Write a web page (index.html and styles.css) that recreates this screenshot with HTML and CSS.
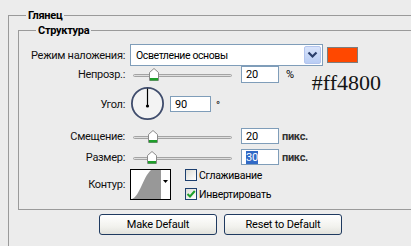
FILE: index.html
```html
<!DOCTYPE html>
<html lang="ru">
<head>
    <meta charset="UTF-8">
    <title>Глянец</title>
    <link rel="stylesheet" href="styles.css">
</head>
<body>

    <fieldset class="group">
        <legend>Глянец</legend>

        <fieldset class="group inner">
            <legend>Структура</legend>

            <div class="row row-mode">
                <span class="caption">Режим наложения:</span>
                <div class="select">
                    <span class="select-text">Осветление основы</span>
                    <span class="select-arrow">
                        <svg width="11" height="8" viewBox="0 0 11 8"><path d="M1.5 1.5 L5.5 5.5 L9.5 1.5" fill="none" stroke="#2b3f6b" stroke-width="2.2"/></svg>
                    </span>
                </div>
                <span class="swatch"></span>
            </div>

            <div class="row row-opacity">
                <span class="caption">Непрозр.:</span>
                <div class="slider">
                    <div class="track"></div>
                    <svg class="thumb" style="left: 19px" width="10" height="13" viewBox="0 0 10 13"><path d="M0.5 12.5 V4.5 L5 0.5 L9.5 4.5 V12.5 Z" fill="#fff" stroke="#8a8a8a"/><rect x="1" y="10" width="8" height="2.5" fill="#1f9e2a"/></svg>
                </div>
                <span class="field">20</span>
                <span class="unit">%</span>
                <span class="hex">#ff4800</span>
            </div>

            <div class="row row-angle">
                <span class="caption">Угол:</span>
                <svg class="dial" width="35" height="34" viewBox="0 0 35 34">
                    <circle cx="17.5" cy="16.5" r="15.6" fill="#f3f3f3" stroke="#3f4c6c" stroke-width="1.8"/>
                    <line x1="17.5" y1="1.5" x2="17.5" y2="19" stroke="#000" stroke-width="1.2"/>
                    <circle cx="17.5" cy="19" r="1.6" fill="#000"/>
                </svg>
                <span class="field field-angle">90</span>
                <span class="degree">°</span>
            </div>

            <div class="row row-offset">
                <span class="caption">Смещение:</span>
                <div class="slider">
                    <div class="track"></div>
                    <svg class="thumb" style="left: 18px" width="10" height="13" viewBox="0 0 10 13"><path d="M0.5 12.5 V4.5 L5 0.5 L9.5 4.5 V12.5 Z" fill="#fff" stroke="#8a8a8a"/><rect x="1" y="10" width="8" height="2.5" fill="#1f9e2a"/></svg>
                </div>
                <span class="field">20</span>
                <span class="unit unit-px">пикс.</span>
            </div>

            <div class="row row-size">
                <span class="caption">Размер:</span>
                <div class="slider">
                    <div class="track"></div>
                    <svg class="thumb" style="left: 17px" width="10" height="13" viewBox="0 0 10 13"><path d="M0.5 12.5 V4.5 L5 0.5 L9.5 4.5 V12.5 Z" fill="#fff" stroke="#8a8a8a"/><rect x="1" y="10" width="8" height="2.5" fill="#1f9e2a"/></svg>
                </div>
                <span class="field"><span class="selected">30</span></span>
                <span class="unit unit-px">пикс.</span>
            </div>

            <div class="row row-contour">
                <span class="caption">Контур:</span>
                <svg class="contour" width="41" height="31" viewBox="0 0 41 31">
                    <rect x="0.5" y="0.5" width="40" height="30" fill="#fff" stroke="#000"/>
                    <path d="M2 30 C10 27 13 8 21 1 L31 1 L31 30 Z" fill="#989898"/>
                    <path d="M33 11 H38 L35.5 14 Z" fill="#000"/>
                </svg>
                <div class="checks">
                    <label class="check"><span class="box"></span>Сглаживание</label>
                    <label class="check"><span class="box">
                        <svg width="10" height="10" viewBox="0 0 10 10"><path d="M1.5 5 L4 7.5 L8.8 2" fill="none" stroke="#1fa02a" stroke-width="2"/></svg>
                    </span>Инвертировать</label>
                </div>
            </div>
        </fieldset>

        <div class="actions">
            <button>Make Default</button>
            <button>Reset to Default</button>
        </div>
    </fieldset>

</body>
</html>
```

FILE: styles.css
```css
* {
    box-sizing: border-box;
}

body {
    margin: 0;
    background: #ececec;
    color: #000;
    font-family: Roboto, 'Liberation Sans', Arial, sans-serif;
    font-size: 11px;
    letter-spacing: -0.3px;
    overflow: hidden;
}

.group {
    margin: 9px 0 0 8px;
    padding: 0 0 30px 9px;
    border: 1px solid #9a9a9a;
    border-right: none;
    border-bottom: none;
    min-width: 0;
}

.group legend {
    margin-left: 8px;
    padding: 0 2px;
    font-weight: bold;
    line-height: 13px;
}

.inner {
    margin: 2px 0 0 0;
    padding: 7px 0 9px 0;
    border-bottom: 1px solid #9a9a9a;
}

.inner legend {
    margin-left: 17px;
}

.row {
    display: flex;
    align-items: center;
}

.caption {
    width: 106px;
    margin-right: 5px;
    text-align: right;
    white-space: nowrap;
    color: #111;
}

.row-mode {
    height: 22px;
}

.row-opacity {
    height: 17px;
}

.row-angle {
    height: 34px;
    margin-top: 4px;
}

.row-offset {
    height: 16px;
    margin-top: 7px;
}

.row-size {
    height: 16px;
    margin-top: 5px;
}

.row-contour {
    height: 31px;
    margin-top: 4px;
}

/* dropdown */
.select {
    display: flex;
    align-items: center;
    width: 193px;
    height: 22px;
    border: 1px solid #7f9db9;
    background: #fff;
    padding: 1px;
}

.select-text {
    flex: 1;
    padding-left: 4px;
    font-size: 10.5px;
    letter-spacing: -0.4px;
}

.select-arrow {
    display: flex;
    align-items: center;
    justify-content: center;
    width: 17px;
    height: 18px;
    border: 1px solid #b3c5ee;
    border-radius: 2px;
    background: linear-gradient(#d9e4fb, #b9cdf4);
}

.swatch {
    width: 31px;
    height: 16px;
    margin-left: 4px;
    border: 1px solid #7d7d7d;
    background: #ff4800;
}

/* slider */
.slider {
    position: relative;
    width: 111px;
    height: 13px;
}

.track {
    position: absolute;
    left: 3px;
    top: 6px;
    width: 99px;
    height: 3px;
    border: 1px solid #a3a3a3;
    border-radius: 2px;
    background: #dedede;
}

.thumb {
    position: absolute;
    top: 0;
}

.field {
    display: flex;
    align-items: center;
    width: 38px;
    height: 100%;
    padding-left: 4px;
    border: 1px solid #7f9db9;
    background: #fff;
}

.field-angle {
    width: 41px;
    height: 16px;
    margin-left: 5px;
}

.selected {
    background: #3169c6;
    color: #fff;
}

.unit {
    margin-left: 7px;
}

.unit-px {
    margin-left: 3px;
    font-weight: bold;
    color: #333;
}

.degree {
    align-self: flex-start;
    margin: 12px 0 0 5px;
}

.hex {
    align-self: flex-start;
    margin: 6px 0 0 18px;
    font-family: 'Liberation Serif', 'Times New Roman', serif;
    font-size: 22px;
    line-height: 22px;
    letter-spacing: 0;
    color: #141414;
}

/* contour + checkboxes */
.checks {
    display: flex;
    flex-direction: column;
    gap: 7px;
    margin-left: 14px;
}

.check {
    display: flex;
    align-items: center;
    height: 12px;
    font-size: 10.5px;
}

.box {
    display: flex;
    align-items: center;
    justify-content: center;
    width: 12px;
    height: 12px;
    margin-right: 2px;
    border: 1px solid #1c3f6e;
    background: linear-gradient(135deg, #dcdcd6, #fff);
}

/* buttons */
.actions {
    display: flex;
    gap: 7px;
    margin: 4px 0 0 81px;
}

button {
    width: 118px;
    height: 21px;
    padding: 0;
    border: 1px solid #1f3a60;
    border-radius: 3px;
    background: linear-gradient(#fff, #f2f2ee 60%, #e2e2dc);
    font-family: inherit;
    font-size: 11px;
    letter-spacing: -0.2px;
    color: #000;
}
```
